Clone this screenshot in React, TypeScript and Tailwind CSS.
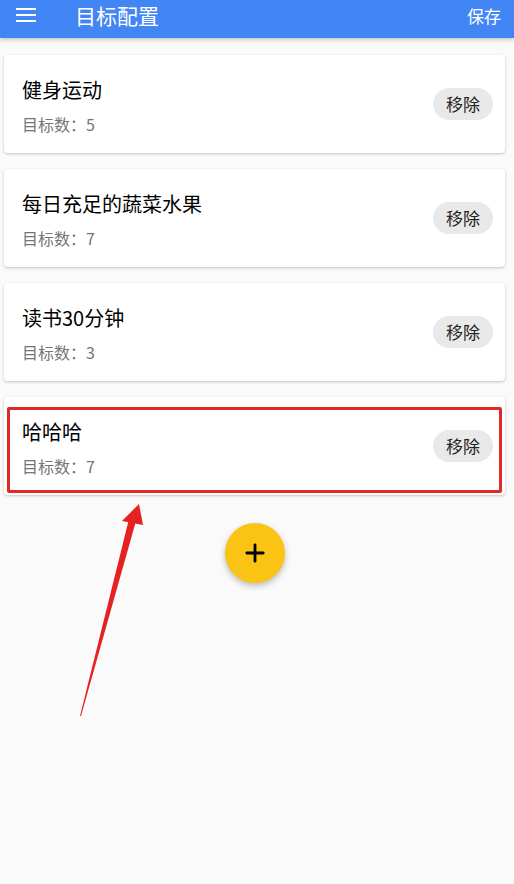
import { Plus } from 'lucide-react'

const goals = [
  { name: '健身运动', count: 5 },
  { name: '每日充足的蔬菜水果', count: 7 },
  { name: '读书30分钟', count: 3 },
  { name: '哈哈哈', count: 7, marked: true },
]

function GoalCard({ name, count, marked }: { name: string; count: number; marked?: boolean }) {
  return (
    <div className="relative flex h-[98px] items-center justify-between rounded-[4px] bg-white pl-[18px] pr-[12px] shadow-[0_1px_3px_rgba(0,0,0,0.22)]">
      <div className="flex flex-col pt-[2px]">
        <span className="text-[20px] leading-[28px] text-black">{name}</span>
        <span className="mt-[9px] text-[16px] leading-[22px] text-[#757575]">目标数：{count}</span>
      </div>
      <button className="h-[32px] w-[60px] rounded-full bg-[#e9e9e9] text-[17px] text-[#222]">移除</button>
      {marked && (
        <div className="pointer-events-none absolute inset-x-[3px] top-[10px] bottom-[2px] rounded-[2px] border-[3px] border-[#e02a2a]" />
      )}
    </div>
  )
}

export default function App() {
  return (
    <div
      className="relative min-h-[884px] w-[514px] overflow-hidden bg-[#fafafa]"
      style={{ fontFamily: '"Noto Sans CJK SC", Roboto, "Noto Sans", sans-serif' }}
    >
      <header className="flex h-[38px] items-center bg-[#4285f4] pb-[8px] text-white shadow-[0_2px_4px_rgba(0,0,0,0.2)]">
        <div className="ml-[16px] flex w-[20px] flex-col gap-[4px]">
          <span className="h-[2px] bg-white" />
          <span className="h-[2px] bg-white" />
          <span className="h-[2px] bg-white" />
        </div>
        <h1 className="ml-[39px] text-[21px] leading-none">目标配置</h1>
        <button className="ml-auto mr-[13px] text-[17px] leading-none">保存</button>
      </header>

      <main className="flex flex-col gap-[16px] px-[4px] pt-[17px] pr-[9px]">
        {goals.map((g) => (
          <GoalCard key={g.name} {...g} />
        ))}
        <div className="flex justify-center pt-[12px]">
          <button className="flex h-[60px] w-[60px] items-center justify-center rounded-full bg-[#fbc313] shadow-[0_3px_6px_rgba(0,0,0,0.25)]">
            <Plus className="h-[28px] w-[28px] text-black" strokeWidth={2.4} />
          </button>
        </div>
      </main>

      {/* annotation arrow */}
      <svg className="pointer-events-none absolute left-0 top-0" width="514" height="884">
        <polygon points="80,716 129,519 136,521 81,716" fill="#e52222" />
        <polygon points="122,521 139,504 143,525" fill="#e52222" />
      </svg>
    </div>
  )
}
